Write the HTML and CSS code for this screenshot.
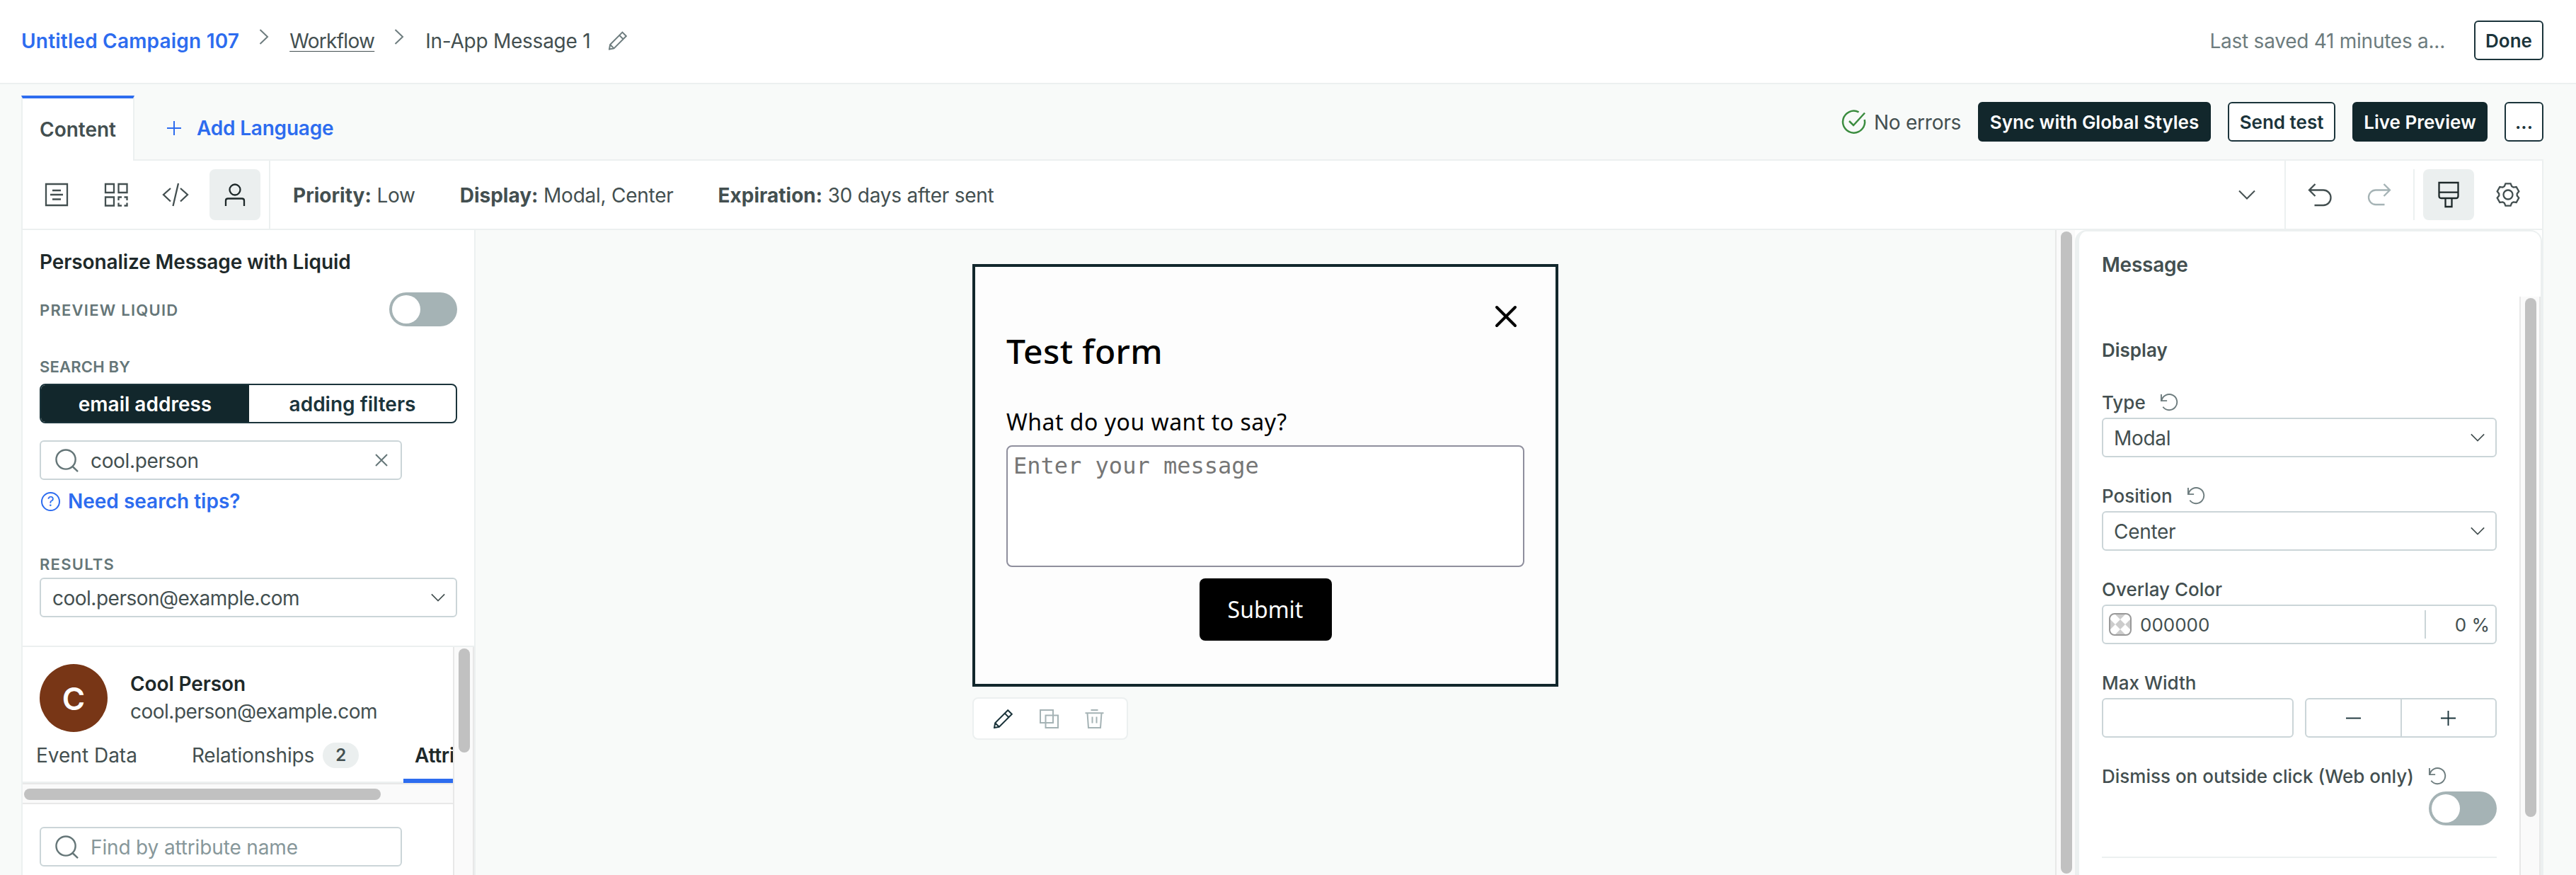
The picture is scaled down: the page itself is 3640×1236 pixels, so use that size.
FILE: index.html
```html
<!DOCTYPE html>
<html lang="en">
<head>
  <meta charset="UTF-8">
  <title>In-App Message 1</title>
  <meta name="viewport" content="width=device-width, initial-scale=1.0">
  <link rel="stylesheet" href="styles.css">
</head>
<body>
  <!-- shared icons -->
  <svg class="sprite">
    <symbol id="i-pencil" viewBox="0 0 27 27"><path d="M1 26l1.2-6.8L20.2 1.2l5.6 5.6-18 18zM15.8 5.6l5.6 5.6M2.2 19.2l5.6 5.6"/></symbol>
    <symbol id="i-right" viewBox="0 0 14 22"><path d="M1.5 1l10.5 10L1.5 21"/></symbol>
    <symbol id="i-down" viewBox="0 0 24 14"><path d="M1 1.5l11 11 11-11"/></symbol>
    <symbol id="i-search" viewBox="0 0 34 34"><circle cx="15.500" cy="15.500" r="14"/><path d="M25 25.500l8 7.500"/></symbol>
    <symbol id="i-reset" viewBox="0 0 26 26"><path d="M1.500 1v9.500H10M2 10A11.500 11.500 0 1 1 4 19.500"/></symbol>
  </svg>

  <header>
    <nav class="crumbs">
      <a class="campaign">Untitled Campaign 107</a>
      <svg class="icon sep"><use href="#i-right"/></svg>
      <a class="workflow">Workflow</a>
      <svg class="icon sep"><use href="#i-right"/></svg>
      <span class="current">In-App Message 1</span>
      <svg class="icon pencil"><use href="#i-pencil"/></svg>
    </nav>
    <span class="saved">Last saved 41 minutes a...</span>
    <button class="btn done">Done</button>
  </header>

  <div class="tabbar">
    <div class="tab">Content</div>
    <a class="add-language">
      <svg class="icon" width="22" height="22" viewBox="0 0 22 22"><path d="M11 1v20M1 11h20"/></svg>
      Add Language
    </a>
    <div class="actions">
      <span class="no-errors">
        <svg class="icon" width="35" height="35" viewBox="0 0 35 35"><path d="M24.500 3.300A15.500 15.500 0 1 0 32.700 14M11 16l6 6L33 4.500"/></svg>
        No errors
      </span>
      <button class="btn dark sync">Sync with Global Styles</button>
      <button class="btn send">Send test</button>
      <button class="btn dark live">Live Preview</button>
      <button class="btn more">...</button>
    </div>
  </div>

  <main class="editor">
    <div class="toolbar">
      <div class="tools">
        <div class="tool"><svg class="icon" width="34" height="34" viewBox="0 0 34 34"><path d="M2 2h30v30H2zM11 11h12M8 17h18M11 23.500h12"/></svg></div>
        <div class="tool"><svg class="icon" width="34" height="34" viewBox="0 0 34 34"><path d="M2 2h12v12H2zM20.500 2h12v12h-12zM2 20.500h12v12H2zM20.500 25v-4.500H25M28.500 20.500h4V25M32.500 28.500v4h-4M25 32.500h-4.500v-4"/></svg></div>
        <div class="tool"><svg class="icon" width="38" height="34" viewBox="0 0 38 34"><path d="M12 8L2 17l10 9.500M26 8l10 9-10 9.500M23 1l-7.500 32"/></svg></div>
        <div class="tool on"><svg class="icon" width="30" height="34" viewBox="0 0 30 34"><circle cx="15" cy="10" r="7.500"/><path d="M2 33v-7.500q0-3 3-3h20q3 0 3 3V33"/></svg></div>
      </div>
      <div class="summary">
        <span><b>Priority:</b> Low</span>
        <span><b>Display:</b> Modal, Center</span>
        <span><b>Expiration:</b> 30 days after sent</span>
      </div>
      <svg class="icon expand" width="24" height="14"><use href="#i-down"/></svg>
      <div class="history">
        <div class="tool"><svg class="icon" width="34" height="34" viewBox="0 0 34 34"><path d="M10.500 2L2 10.500l8.500 8.500M2 10.500h20A10.500 10.750 0 0 1 22 32H9.500"/></svg></div>
        <div class="tool faded"><svg class="icon" width="34" height="34" viewBox="0 0 34 34"><path d="M23.500 2l8.500 8.500-8.500 8.500M32 10.500H12A10 10.250 0 0 0 12 31h12.500"/></svg></div>
        <i class="rule"></i>
        <div class="tool on"><svg class="icon" width="30" height="36" viewBox="0 0 30 36"><path d="M1.500 1h27v19q0 3-3 3h-21q-3 0-3-3zM1.500 14.700h27M10.500 23v12h9V23"/></svg></div>
        <div class="tool"><svg class="icon" width="34" height="34" viewBox="-1 -1 34 34"><path d="M12.400.4H19.600L21.200 4.300 23.500 5.600 27.700 5.100 31.300 11.300 28.700 14.700V17.300L31.300 20.700 27.700 26.900 23.500 26.400 21.200 27.700 19.600 31.600H12.400L10.800 27.700 8.500 26.400 4.300 26.900.7 20.700 3.300 17.300V14.700L.7 11.300 4.300 5.100 8.500 5.600 10.800 4.300z"/><circle cx="16" cy="16" r="6.500"/></svg></div>
      </div>
    </div>

    <div class="workspace">
      <aside class="left">
        <div class="person-search">
          <h2>Personalize Message with Liquid</h2>
          <div class="preview-row">
            <span class="caps wide">PREVIEW LIQUID</span>
            <div class="toggle"></div>
          </div>
          <div class="caps search-by">SEARCH BY</div>
          <div class="segmented">
            <div class="seg active">email address</div>
            <div class="seg">adding filters</div>
          </div>
          <div class="search">
            <svg class="icon"><use href="#i-search"/></svg>
            <span>cool.person</span>
            <svg class="icon clear" viewBox="0 0 18 18"><path d="M1 1l16 16M17 1L1 17"/></svg>
          </div>
          <a class="tips"><i class="q">?</i>Need search tips?</a>
          <div class="caps wide results">RESULTS</div>
          <div class="select tight">cool.person@example.com
            <svg class="icon"><use href="#i-down"/></svg>
          </div>
        </div>

        <div class="person">
          <div class="person-main">
            <div class="profile">
              <div class="avatar">C</div>
              <div>
                <div class="name">Cool Person</div>
                <div class="email">cool.person@example.com</div>
              </div>
            </div>
            <div class="person-tabs">
              <div class="ptab">Event Data</div>
              <div class="ptab rel">Relationships<span class="badge">2</span></div>
              <div class="ptab current">Attributes</div>
            </div>
            <div class="hscroll"><i></i></div>
            <div class="search attr">
              <svg class="icon"><use href="#i-search"/></svg>
              <span>Find by attribute name</span>
            </div>
          </div>
          <div class="vscroll person-scroll"><i></i></div>
        </div>
      </aside>

      <section class="canvas">
        <div class="stage">
          <div class="modal">
            <svg class="icon close" width="32" height="32" viewBox="0 0 32 32"><path d="M3 3l26 26M29 3L3 29"/></svg>
            <h1>Test form</h1>
            <label for="msg">What do you want to say?</label>
            <textarea id="msg" placeholder="Enter your message"></textarea>
            <button class="submit">Submit</button>
          </div>
          <div class="block-tools">
            <svg class="icon edit"><use href="#i-pencil"/></svg>
            <svg class="icon" viewBox="0 0 27 27"><path d="M1 1h18v18H1zM8.500 8.500h17.500v17.500H8.500z"/></svg>
            <svg class="icon" viewBox="0 0 27 27"><path d="M8.500 1h10M.5 5.300h26M3.500 5.300L5 26h17l1.500-20.700M10.500 10.500v9M16.500 10.500v9"/></svg>
          </div>
        </div>
      </section>
      <div class="vscroll canvas-scroll"><i></i></div>

      <aside class="right">
        <h2>Message</h2>
        <div class="right-body">
          <div class="fields">
            <h3>Display</h3>
            <div class="field">
              <div class="label">Type <svg class="icon"><use href="#i-reset"/></svg></div>
              <div class="select">Modal <svg class="icon"><use href="#i-down"/></svg></div>
            </div>
            <div class="field">
              <div class="label">Position <svg class="icon"><use href="#i-reset"/></svg></div>
              <div class="select">Center <svg class="icon"><use href="#i-down"/></svg></div>
            </div>
            <div class="field">
              <div class="label">Overlay Color</div>
              <div class="color">
                <svg class="swatch" viewBox="0 0 32 32"><path d="M16 8l8 8-8 8-8-8zM8 0h16l-8 8zM8 32h16l-8-8zM0 8v16l8-8zM32 8v16l-8-8z"/></svg>
                <span>000000</span>
                <span class="percent">0 %</span>
              </div>
            </div>
            <div class="field">
              <div class="label">Max Width</div>
              <div class="width-row">
                <div class="input"></div>
                <div class="stepper">
                  <div><svg class="icon" viewBox="0 0 22 22"><path d="M0 11h22"/></svg></div>
                  <div><svg class="icon" viewBox="0 0 22 22"><path d="M0 11h22M11 0v22"/></svg></div>
                </div>
              </div>
            </div>
            <div class="field dismiss">
              <div class="label">Dismiss on outside click (Web only) <svg class="icon"><use href="#i-reset"/></svg></div>
              <div class="toggle"></div>
            </div>
          </div>
          <div class="vscroll right-scroll"><i></i></div>
        </div>
      </aside>
    </div>
  </main>
</body>
</html>
```
FILE: styles.css
```css
* {
  box-sizing: border-box;
}
body {
  margin: 0;
  height: 1236px;
  overflow: hidden;
  font-family: 'Inter', sans-serif;
  font-size: 28px;
  line-height: 36px;
  color: #434f50;
  background: #f8faf9;
}
h1, h2, h3 {
  margin: 0;
  font-weight: 600;
}
button {
  font-family: inherit;
  padding: 0;
}
.sprite {
  display: none;
}
.icon {
  display: block;
  flex: none;
  fill: none;
  stroke: currentColor;
  stroke-width: 2;
  overflow: visible;
}

/* header */
header {
  display: flex;
  align-items: center;
  height: 119px;
  padding: 0 46px 3px 30px;
  background: #fff;
  border-bottom: 2px solid #ecf0f0;
}
.crumbs {
  display: flex;
  align-items: center;
  gap: 28px;
  padding-top: 2px;
}
.campaign {
  color: #2d6cef;
  font-weight: 600;
  letter-spacing: 0.2px;
}
.workflow {
  margin-left: 1px;
  letter-spacing: -0.7px;
  text-decoration: underline;
  text-decoration-thickness: 1px;
  text-underline-offset: 4px;
}
.current {
  margin-left: 2px;
  letter-spacing: -0.25px;
}
.sep {
  width: 14px;
  height: 22px;
  margin-bottom: 12px;
  color: #6d7c7e;
}
.pencil {
  width: 26px;
  height: 27px;
  margin: 0 0 2px -2px;
  color: #6d7c7e;
}
.saved {
  margin-left: auto;
  margin-right: 41px;
  padding-top: 2px;
  letter-spacing: -0.25px;
  color: #6d7c7e;
}
.btn {
  height: 56px;
  border: 2px solid #1b343b;
  border-radius: 6px;
  background: #fff;
  color: #1b343b;
  font-size: 26px;
  font-weight: 600;
}
.btn.dark {
  background: #12272c;
  border-color: #12272c;
  color: #fff;
}
.done {
  width: 98px;
}

/* tab bar */
.tabbar {
  display: flex;
  align-items: flex-end;
  height: 108px;
  margin: 0 46px 0 30px;
  border-bottom: 2px solid #ecf0f0;
}
.tab {
  width: 160px;
  height: 92px;
  margin-bottom: -2px;
  border: 2px solid #ecf0f0;
  border-top: 4px solid #2d6cef;
  border-bottom: 0;
  background: #fff;
  font-weight: 600;
  line-height: 88px;
  text-align: center;
}
.add-language {
  display: flex;
  align-items: center;
  gap: 21px;
  height: 88px;
  margin-left: 45px;
  color: #2d6cef;
  font-weight: 600;
  letter-spacing: -0.2px;
}
.actions {
  display: flex;
  align-items: center;
  align-self: center;
  gap: 24px;
  margin-left: auto;
}
.no-errors {
  display: flex;
  align-items: center;
  gap: 11px;
  padding-top: 1px;
  letter-spacing: -0.25px;
}
.no-errors .icon {
  color: #3b8c3f;
  stroke-width: 2.5;
}
.sync {
  width: 329px;
}
.send {
  width: 152px;
}
.live {
  width: 191px;
}
.more {
  width: 55px;
}

/* editor */
.editor {
  margin: 0 46px 0 30px;
  border: 2px solid #ecf0f0;
  border-width: 0 2px;
  background: #fff;
}
.toolbar {
  display: flex;
  align-items: center;
  height: 98px;
  border-bottom: 2px solid #ecf0f0;
}
.tools, .history {
  display: flex;
  align-items: center;
  gap: 12px;
  height: 96px;
  padding: 0 12px;
}
.tools {
  border-right: 2px solid #ecf0f0;
}
.history {
  border-left: 2px solid #ecf0f0;
}
.tool {
  display: flex;
  align-items: center;
  justify-content: center;
  width: 72px;
  height: 72px;
  border-radius: 8px;
}
.tool .icon {
  stroke-width: 2.3;
}
.tool.on {
  background: #ebefef;
  color: #1e292a;
}
.tool.faded {
  color: #a5b3b5;
}
.rule {
  width: 2px;
  height: 72px;
  background: #ecf0f0;
}
.summary {
  display: flex;
  gap: 63px;
  padding: 2px 0 0 32px;
  letter-spacing: -0.25px;
}
.summary b {
  letter-spacing: 0;
}
.expand {
  margin: 0 41px 0 auto;
}
.workspace {
  display: flex;
  height: 911px;
}

/* left panel */
.left {
  width: 640px;
  border-right: 2px solid #ecf0f0;
}
.person-search {
  height: 589px;
  padding: 27px 24px 0;
  border-bottom: 2px solid #ecf0f0;
}
.left h2 {
  font-size: 28px;
  letter-spacing: -0.1px;
  color: #1e292a;
}
.preview-row {
  display: flex;
  align-items: center;
  justify-content: space-between;
  margin-top: 25px;
}
.caps {
  font-size: 22px;
  line-height: 28px;
  font-weight: 600;
  letter-spacing: 0.2px;
  color: #657678;
}
.caps.wide {
  padding-top: 1px;
  letter-spacing: 1.25px;
}
.toggle {
  width: 96px;
  height: 48px;
  padding: 4px;
  border-radius: 24px;
  background: #a5b3b5;
}
.toggle::before {
  content: '';
  display: block;
  width: 40px;
  height: 40px;
  border-radius: 50%;
  background: #fff;
}
.search-by {
  margin: 43px 0 10px;
}
.segmented {
  display: flex;
  width: 590px;
  height: 56px;
  border: 2px solid #1b343b;
  border-radius: 8px;
  overflow: hidden;
}
.seg {
  flex: 1;
  font-weight: 600;
  line-height: 54px;
  text-align: center;
  color: #1b343b;
}
.seg.active {
  flex: none;
  width: 294px;
  background: #12272c;
  color: #fff;
}
.search {
  display: flex;
  align-items: center;
  width: 512px;
  height: 56px;
  margin-top: 24px;
  padding: 0 18px 0 20px;
  border: 2px solid #cbd5d8;
  border-radius: 6px;
  background: #fff;
}
.search .icon {
  width: 33px;
  height: 33px;
  stroke-width: 2.5;
  color: #657678;
}
.search span {
  margin-left: 17px;
  padding-top: 2px;
  letter-spacing: -0.35px;
}
.search .icon.clear {
  width: 18px;
  height: 18px;
  margin-left: auto;
  stroke-width: 2;
}
.tips {
  display: flex;
  align-items: center;
  height: 32px;
  margin-top: 14px;
  font-weight: 600;
  color: #2d6cef;
}
.q {
  width: 27px;
  height: 27px;
  margin: 0 11px 0 2px;
  border: 2px solid #2d6cef;
  border-radius: 50%;
  font-size: 19px;
  font-style: normal;
  font-weight: 400;
  line-height: 23px;
  text-align: center;
}
.results {
  margin: 58px 0 5px;
}
.select {
  display: flex;
  align-items: center;
  justify-content: space-between;
  height: 56px;
  padding: 2px 15px 0;
  border: 2px solid #cbd5d8;
  border-radius: 6px;
  letter-spacing: -0.3px;
}
.select .icon {
  width: 20px;
  height: 12px;
  margin-bottom: 3px;
}
.left .select {
  width: 590px;
  padding-left: 16px;
}
.select.tight, .email {
  letter-spacing: -0.5px;
}

/* person card */
.person {
  display: flex;
  height: 322px;
}
.person-main {
  width: 608px;
  overflow: hidden;
}
.profile {
  display: flex;
  gap: 32px;
  padding: 24px 24px 0;
}
.avatar {
  width: 96px;
  height: 96px;
  border-radius: 50%;
  background: #783616;
  color: #fff;
  font-size: 44px;
  font-weight: 600;
  line-height: 98px;
  text-align: center;
}
.profile .name, .email {
  line-height: 39px;
}
.name {
  padding-top: 9px;
  font-weight: 600;
  letter-spacing: -0.1px;
  color: #1e292a;
}
.person-tabs {
  display: flex;
  gap: 45px;
  width: 900px;
  height: 72px;
  padding-left: 3px;
  border-bottom: 2px solid #ecf0f0;
}
.ptab {
  height: 72px;
  padding: 0 16px;
  line-height: 67px;
}
.rel {
  letter-spacing: -0.2px;
}
.ptab.current {
  border-bottom: 6px solid #2d6cef;
  font-weight: 600;
  color: #1e292a;
}
.badge {
  display: inline-block;
  width: 51px;
  height: 36px;
  margin-left: 12px;
  border-radius: 18px;
  background: #ebefef;
  font-size: 24px;
  font-weight: 600;
  line-height: 36px;
  text-align: center;
  vertical-align: 2px;
}
.hscroll {
  height: 30px;
  padding: 6px 2px;
  border: 2px solid #e8e8e8;
  border-width: 2px 0;
  background: #fafafa;
}
.hscroll i {
  display: block;
  width: 504px;
  height: 16px;
  border-radius: 8px;
  background: #c1c1c1;
}
.attr {
  margin: 32px 24px 0;
}
.attr span {
  letter-spacing: -0.15px;
  color: #87979a;
}
.vscroll {
  flex: none;
  width: 30px;
  padding: 2px 6px;
  border: 2px solid #e8e8e8;
  border-width: 0 2px;
  background: #fafafa;
}
.vscroll i {
  display: block;
  width: 16px;
  height: 100%;
  border-radius: 8px;
  background: #c1c1c1;
}
.person-scroll i {
  height: 147px;
}

/* canvas */
.canvas {
  flex: 1;
  padding-top: 48px;
  background: #f8faf9;
}
.stage {
  width: 828px;
  margin: 0 auto;
}
.modal {
  display: flex;
  flex-direction: column;
  height: 597px;
  padding: 54px 44px 0;
  border: 4px solid #12272c;
  background: #fdfdfd;
  color: #000;
  font-family: 'Noto Sans', sans-serif;
  font-size: 32px;
}
.close {
  align-self: flex-end;
  margin-right: 10px;
  stroke-width: 4;
  stroke-linecap: round;
}
.modal h1 {
  padding-top: 2px;
  font-size: 48px;
  line-height: 62px;
  font-weight: 500;
  letter-spacing: 0.4px;
}
.modal label {
  margin: 47px 0 11px;
  line-height: 44px;
  letter-spacing: 0.5px;
}
.modal textarea {
  height: 172px;
  margin: 0;
  padding: 7px 8px;
  border: 2px solid #8f8f9d;
  border-radius: 8px;
  background: #fff;
  font: 32px/40px 'DejaVu Sans Mono', monospace;
  resize: none;
}
.modal textarea::placeholder {
  color: #767676;
}
.submit {
  width: 187px;
  height: 88px;
  margin: 16px auto 0;
  padding-bottom: 2px;
  border: 0;
  border-radius: 8px;
  background: #000;
  color: #fff;
  font-size: 32px;
}
.block-tools {
  display: flex;
  align-items: center;
  justify-content: space-between;
  width: 220px;
  height: 60px;
  margin-top: 15px;
  padding: 0 32px 0 28px;
  border: 2px solid #ecf0f0;
  border-radius: 8px;
  background: #fff;
  color: #a5b3b5;
}
.block-tools .icon {
  width: 27px;
  height: 27px;
}
.block-tools .edit {
  color: #1b343b;
}
.canvas-scroll {
  width: 28px;
  border-right: 0;
}

/* right panel */
.right {
  display: flex;
  flex-direction: column;
  width: 660px;
  border: 2px solid #ecf0f0;
  border-left-width: 6px;
  border-bottom: 0;
  border-radius: 16px 16px 0 0;
}
.right h2 {
  height: 92px;
  padding-left: 32px;
  font-size: 28px;
  line-height: 94px;
  letter-spacing: -0.25px;
}
.right-body {
  display: flex;
  flex: 1;
}
.fields {
  flex: 1;
  padding: 58px 32px 0;
}
.fields h3 {
  margin-bottom: 39px;
  font-size: 26px;
}
.field {
  margin-bottom: 38px;
}
.label {
  display: flex;
  align-items: center;
  gap: 20px;
  height: 32px;
  margin-bottom: 6px;
  padding-top: 1px;
  font-size: 26px;
  font-weight: 500;
}
.label .icon {
  width: 26px;
  height: 25px;
  margin-bottom: 1px;
  color: #6d7c7e;
}
.color {
  display: flex;
  align-items: center;
  height: 56px;
  padding: 0 8px;
  border: 2px solid #cbd5d8;
  border-radius: 6px;
  font-size: 26px;
}
.swatch {
  width: 32px;
  height: 32px;
  margin-right: 12px;
  border: 2px solid #999;
  border-radius: 8px;
  background: #fff;
  fill: #ccc;
}
.color span {
  padding-top: 1px;
}
.percent {
  width: 92px;
  height: 40px;
  margin-left: auto;
  border-left: 2px solid #cbd5d8;
  line-height: 40px;
  text-align: right;
}
.width-row {
  display: flex;
  gap: 16px;
}
.input, .stepper {
  flex: 1;
  height: 56px;
  border: 2px solid #cbd5d8;
  border-radius: 6px;
}
.stepper {
  display: flex;
}
.stepper div {
  flex: 1;
  display: flex;
  align-items: center;
  justify-content: center;
  color: #1b343b;
}
.stepper div + div {
  border-left: 2px solid #cbd5d8;
}
.stepper .icon {
  width: 21px;
  height: 21px;
}
.dismiss {
  height: 132px;
  border-bottom: 2px solid #ecf0f0;
}
.dismiss .toggle {
  margin-left: auto;
}
.right-scroll i {
  height: 733px;
}
```
